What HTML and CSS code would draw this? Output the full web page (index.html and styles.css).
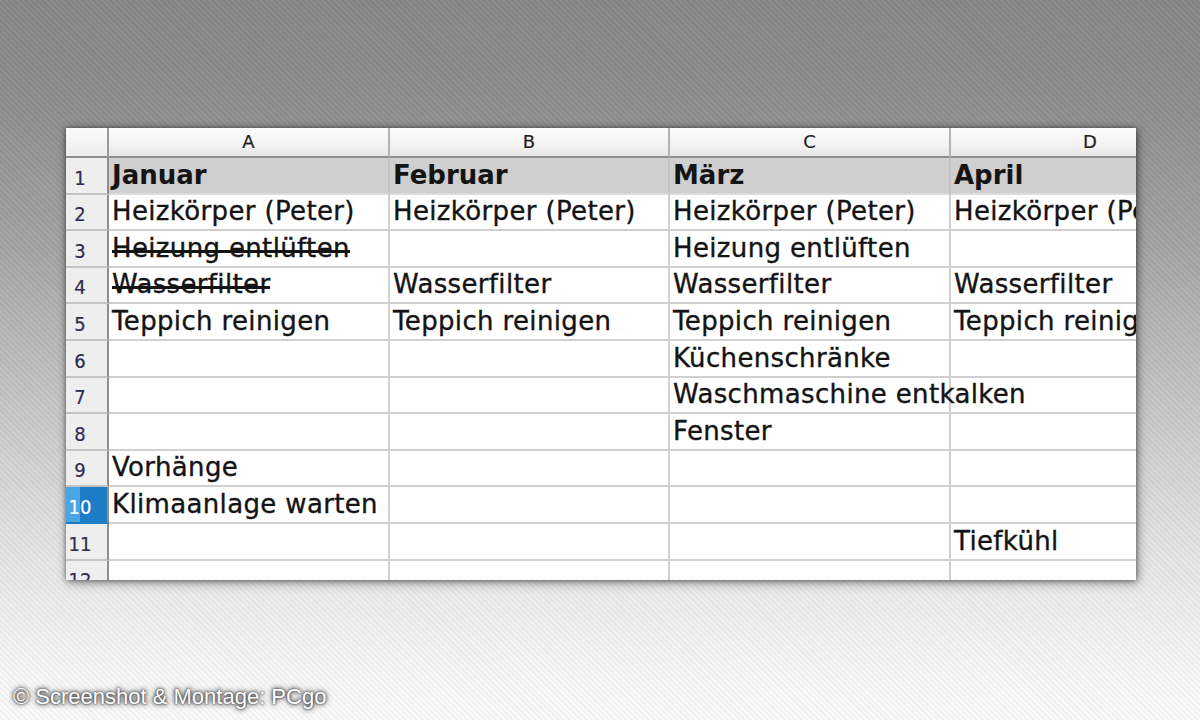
FILE: index.html
```html
<!DOCTYPE html>
<html lang="de">
<head>
<meta charset="utf-8">
<title>Tabelle</title>
<link rel="stylesheet" href="styles.css">
</head>
<body>
<div class="stage">
  <div class="sheet">
    <div class="corner"></div>
    <div class="colhead">A</div>
    <div class="colhead">B</div>
    <div class="colhead">C</div>
    <div class="colhead">D</div>

    <div class="rowhead">1</div>
    <div class="cell r1">Januar</div>
    <div class="cell r1">Februar</div>
    <div class="cell r1">März</div>
    <div class="cell r1">April</div>

    <div class="rowhead">2</div>
    <div class="cell">Heizkörper (Peter)</div>
    <div class="cell">Heizkörper (Peter)</div>
    <div class="cell">Heizkörper (Peter)</div>
    <div class="cell">Heizkörper (Peter)</div>

    <div class="rowhead">3</div>
    <div class="cell"><span class="strike">Heizung entlüften</span></div>
    <div class="cell"></div>
    <div class="cell">Heizung entlüften</div>
    <div class="cell"></div>

    <div class="rowhead">4</div>
    <div class="cell"><span class="strike">Wasserfilter</span></div>
    <div class="cell">Wasserfilter</div>
    <div class="cell">Wasserfilter</div>
    <div class="cell">Wasserfilter</div>

    <div class="rowhead">5</div>
    <div class="cell">Teppich reinigen</div>
    <div class="cell">Teppich reinigen</div>
    <div class="cell">Teppich reinigen</div>
    <div class="cell">Teppich reinigen</div>

    <div class="rowhead">6</div>
    <div class="cell"></div>
    <div class="cell"></div>
    <div class="cell">Küchenschränke</div>
    <div class="cell"></div>

    <div class="rowhead">7</div>
    <div class="cell"></div>
    <div class="cell"></div>
    <div class="cell">Waschmaschine entkalken</div>
    <div class="cell"></div>

    <div class="rowhead">8</div>
    <div class="cell"></div>
    <div class="cell"></div>
    <div class="cell">Fenster</div>
    <div class="cell"></div>

    <div class="rowhead">9</div>
    <div class="cell">Vorhänge</div>
    <div class="cell"></div>
    <div class="cell"></div>
    <div class="cell"></div>

    <div class="rowhead sel">10</div>
    <div class="cell">Klimaanlage warten</div>
    <div class="cell"></div>
    <div class="cell"></div>
    <div class="cell"></div>

    <div class="rowhead">11</div>
    <div class="cell"></div>
    <div class="cell"></div>
    <div class="cell"></div>
    <div class="cell">Tiefkühl</div>

    <div class="rowhead">12</div>
    <div class="cell"></div>
    <div class="cell"></div>
    <div class="cell"></div>
    <div class="cell"></div>
  </div>
  <p class="credit">© Screenshot &amp; Montage: PCgo</p>
</div>
</body>
</html>
```

FILE: styles.css
```css
* { box-sizing: border-box; }

html, body {
  margin: 0;
  width: 1200px;
  height: 720px;
  overflow: hidden;
}

body {
  background:
    repeating-linear-gradient(45deg, rgba(255,255,255,0.035) 0 2px, rgba(0,0,0,0.035) 2px 4px),
    linear-gradient(180deg, #878787 0%, #8e8e8e 15%, #a5a5a5 35%, #c9c9c9 58%, #e6e6e6 78%, #f6f6f6 92%, #fbfbfb 100%);
  font-family: "DejaVu Sans", sans-serif;
}

.stage {
  padding: 128px 0 0 66px;
}

.sheet {
  width: 1070px;
  height: 452px;
  overflow: hidden;
  background: #ffffff;
  display: grid;
  grid-template-columns: 43px 281px 280px 281px 280px;
  grid-template-rows: 30px repeat(12, 36.6px);
  box-shadow: 0 0 5px rgba(0,0,0,0.5), 2px 3px 10px rgba(0,0,0,0.35);
}

.corner {
  background: linear-gradient(180deg, #fbfbfb, #ededed);
  border-right: 2px solid #9a9a9a;
  border-bottom: 2px solid #8e8e8e;
}

.colhead {
  background: linear-gradient(180deg, #fbfbfb 0%, #f3f3f3 60%, #e6e6e6 100%);
  border-right: 2px solid #b4b4b4;
  border-bottom: 2px solid #8e8e8e;
  display: flex;
  align-items: center;
  justify-content: center;
  font-size: 18px;
  color: #222222;
  padding-bottom: 1px;
  -webkit-text-stroke: 0.2px #222222;
}

.rowhead {
  background: #eeeeee;
  border-right: 2px solid #8e8e8e;
  border-bottom: 2px solid #c4c4c4;
  display: flex;
  align-items: flex-end;
  justify-content: center;
  padding: 0 13px 5px 0;
  font-family: "DejaVu Sans Condensed", "DejaVu Sans", sans-serif;
  font-size: 20px;
  line-height: 1;
  color: #2e2c50;
  -webkit-text-stroke: 0.2px #2e2c50;
}

.rowhead.sel {
  background: linear-gradient(90deg, #4aa6e2 0, #4aa6e2 14px, #1c7cc6 14px);
  color: #ffffff;
  -webkit-text-stroke: 0.2px #ffffff;
  border-bottom-color: #1c7cc6;
}

.cell {
  border-right: 2px solid #d0d0d0;
  border-bottom: 2px solid #d0d0d0;
  display: flex;
  align-items: flex-end;
  padding: 0 0 5px 3px;
  font-size: 26px;
  letter-spacing: 0.35px;
  line-height: 1;
  color: #141414;
  -webkit-text-stroke: 0.35px #141414;
  white-space: nowrap;
  overflow: visible;
}

.cell.r1 {
  background: #cfcfcf;
  font-weight: bold;
  letter-spacing: 0;
  -webkit-text-stroke: 0;
  border-right-color: #c4c4c4;
  border-bottom-color: #dcdcdc;
}

.strike {
  background: linear-gradient(#141414, #141414) 0 15px / 100% 3px no-repeat;
}

.credit {
  margin: 104px 0 0 -53px;
  font-family: "Liberation Sans", Arial, sans-serif;
  font-size: 22px;
  color: #ffffff;
  text-shadow: 0 0 2px #333, 0 0 4px #444, 0 0 6px #666;
}
```
